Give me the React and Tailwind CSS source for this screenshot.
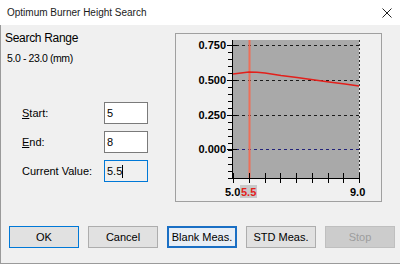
import React from "react";

function Chart() {
  const yMajor = [
    { y: 45, l: "0.750" },
    { y: 80, l: "0.500" },
    { y: 115, l: "0.250" },
    { y: 149, l: "0.000" },
  ];
  const minor = [];
  for (let y = 45; y <= 178; y += 7) minor.push(y);
  const xt = [];
  for (let k = 0; k <= 8; k++) xt.push(Math.round(233 + 15.75 * k));
  const curve = "233,74 241,73 249,72 257,72.3 265,73 281,75.5 297,77.5 313,79.8 329,82 345,84 359,86";
  return (
    <svg width="205" height="167" viewBox="176 34 205 167" className="block">
      <rect x="233" y="40" width="126" height="138" fill="#a9a9a9" />
      {[45, 80, 115].map((y) => (
        <line key={y} x1="236" x2="359" y1={y + 0.5} y2={y + 0.5} stroke="#1c1c1c" strokeDasharray="3 3" />
      ))}
      <line x1="236" x2="359" y1="149.5" y2="149.5" stroke="#22227a" strokeDasharray="3 3" />
      <line x1="359.5" x2="359.5" y1="40" y2="178" stroke="#2a2a2a" strokeDasharray="2 2" />
      <rect x="248.5" y="40" width="2" height="138" fill="#ee6f58" />
      <polyline points={curve} fill="none" stroke="#e3201b" strokeWidth="1.4" />
      <line x1="232.5" x2="232.5" y1="40" y2="179" stroke="#000" />
      <line x1="232" x2="360" y1="178.5" y2="178.5" stroke="#000" />
      {minor.map((y) => (
        <line key={y} x1="228" x2="233" y1={y + 0.5} y2={y + 0.5} stroke="#000" />
      ))}
      {yMajor.map((m) => (
        <line key={m.y} x1="227" x2="237" y1={m.y + 0.5} y2={m.y + 0.5} stroke="#000" />
      ))}
      {xt.map((x) => (
        <line key={x} x1={x + 0.5} x2={x + 0.5} y1="173" y2="183" stroke="#000" />
      ))}
      <g fontFamily="'Liberation Sans', Arial, sans-serif" fontWeight="700" fontSize="11">
        {yMajor.map((m) => (
          <text key={m.l} x="226" y={m.y + 4} textAnchor="end" fill="#000">
            {m.l}
          </text>
        ))}
        <text x="225" y="196" fill="#000">5.0</text>
        <rect x="240" y="185" width="17" height="13" fill="#c9c9c9" />
        <text x="241" y="196" fill="#e3201b">5.5</text>
        <text x="350" y="196" fill="#000">9.0</text>
      </g>
    </svg>
  );
}

function Field({ label, value, focused }) {
  return (
    <div className="flex items-center h-[22px]">
      <div className="w-[99px] pl-[17px] text-[11px] leading-[14px] whitespace-nowrap">{label}</div>
      <div
        className={
          focused
            ? "w-[44px] h-[22px] border border-[#0078d7] bg-[#f0f0f0] flex items-center pl-[2px] text-[11px]"
            : "w-[44px] h-[22px] border border-[#7a7a7a] bg-white flex items-center pl-[2px] text-[11px]"
        }
      >
        {value}
        {focused && <span className="inline-block w-[1px] h-[13px] bg-black" />}
      </div>
    </div>
  );
}

export default function App() {
  return (
    <div className="w-[400px] h-[264px] flex flex-col bg-[#f0f0f0] text-black overflow-hidden font-['Liberation_Sans',Arial,sans-serif]">
      <div className="h-[25px] bg-white flex items-center justify-between pl-[7px] pr-[8px] shrink-0">
        <span className="text-[10px] text-[#1a1a1a]">Optimum Burner Height Search</span>
        <svg width="10" height="10" viewBox="0 0 10 10">
          <path d="M0.5 0.5 L9.5 9.5 M9.5 0.5 L0.5 9.5" stroke="#222" strokeWidth="1" />
        </svg>
      </div>
      <div className="flex-1 flex flex-col border-l border-b border-[#9a9a9a]">
        <div className="flex items-start">
          <div className="w-[174px] pl-[4px] pt-[5px] flex flex-col">
            <div className="text-[12px] leading-[16px] tracking-[-0.3px]">Search Range</div>
            <div className="text-[10.5px] leading-[14px] mt-[5px] pl-[2px] tracking-[-0.4px]">5.0 - 23.0 (mm)</div>
            <div className="flex flex-col gap-[7px] mt-[37px]">
              <Field label={<><span className="underline">S</span>tart:</>} value="5" />
              <Field label={<><span className="underline">E</span>nd:</>} value="8" />
              <Field label="Current Value:" value="5.5" focused />
            </div>
          </div>
          <div className="mt-[8px] w-[207px] h-[169px] border border-[#a0a0a0]">
            <Chart />
          </div>
        </div>
        <div className="flex gap-[9px] pl-[8px] mt-[24px] text-[11px] whitespace-nowrap">
          <div className="w-[70px] h-[22px] border border-[#0078d7] bg-[#e1e1e1] flex items-center justify-center">OK</div>
          <div className="w-[70px] h-[22px] border border-[#adadad] bg-[#e1e1e1] flex items-center justify-center">Cancel</div>
          <div className="w-[70px] h-[22px] border-2 border-[#1a6fc4] bg-[#e8eef5] flex items-center justify-center">Blank Meas.</div>
          <div className="w-[70px] h-[22px] border border-[#adadad] bg-[#e1e1e1] flex items-center justify-center">STD Meas.</div>
          <div className="w-[70px] h-[22px] border border-[#bfbfbf] bg-[#cccccc] text-[#9d9d9d] flex items-center justify-center">Stop</div>
        </div>
      </div>
    </div>
  );
}
